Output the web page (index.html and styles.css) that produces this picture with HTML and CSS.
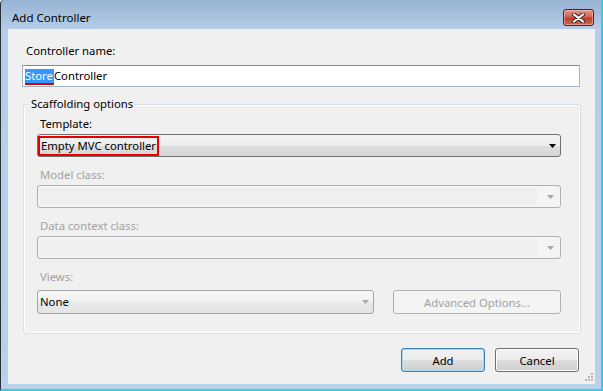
FILE: index.html
```html
<!DOCTYPE html>
<html lang="en">
<head>
    <meta charset="UTF-8">
    <title>Add Controller</title>
    <link rel="stylesheet" href="styles.css">
</head>
<body>
    <div class="window">
        <div class="titlebar">
            <span class="title">Add Controller</span>
            <button class="close">
                <svg width="13" height="10" viewBox="0 0 13 10">
                    <path d="M2 1.5 L11 8.5 M11 1.5 L2 8.5" stroke="#3b2424" stroke-width="4" stroke-linecap="round"/>
                    <path d="M2 1.5 L11 8.5 M11 1.5 L2 8.5" stroke="#ffffff" stroke-width="2.2" stroke-linecap="round"/>
                </svg>
            </button>
        </div>
        <div class="client">
            <div class="lbl first">Controller name:</div>
            <div class="textbox"><span class="sel">Store</span>Controller</div>

            <fieldset class="group">
                <legend>Scaffolding options</legend>

                <div class="lbl">Template:</div>
                <div class="combo">
                    <span class="value marked">Empty MVC controller</span>
                    <svg class="arrow" width="7" height="4" viewBox="0 0 7 4"><path d="M0 0 H7 L3.5 4 Z" fill="#000"/></svg>
                </div>

                <div class="lbl disabled">Model class:</div>
                <div class="combo off">
                    <span class="well"></span>
                    <svg class="arrow" width="7" height="4" viewBox="0 0 7 4"><path d="M0 0 H7 L3.5 4 Z" fill="#a7a7a7"/></svg>
                </div>

                <div class="lbl disabled">Data context class:</div>
                <div class="combo off">
                    <span class="well"></span>
                    <svg class="arrow" width="7" height="4" viewBox="0 0 7 4"><path d="M0 0 H7 L3.5 4 Z" fill="#a7a7a7"/></svg>
                </div>

                <div class="lbl disabled">Views:</div>
                <div class="views-row">
                    <div class="combo views">
                        <span class="value">None</span>
                        <svg class="arrow" width="7" height="4" viewBox="0 0 7 4"><path d="M0 0 H7 L3.5 4 Z" fill="#a7a7a7"/></svg>
                    </div>
                    <button class="btn btn-off">Advanced Options...</button>
                </div>
            </fieldset>

            <div class="actions">
                <button class="btn btn-default">Add</button>
                <button class="btn">Cancel</button>
            </div>

            <svg class="grip" width="8" height="8" viewBox="0 0 8 8">
                <rect x="6" y="0" width="2" height="2" fill="#b5b5b5"/>
                <rect x="3" y="3" width="2" height="2" fill="#b5b5b5"/>
                <rect x="6" y="3" width="2" height="2" fill="#b5b5b5"/>
                <rect x="0" y="6" width="2" height="2" fill="#b5b5b5"/>
                <rect x="3" y="6" width="2" height="2" fill="#b5b5b5"/>
                <rect x="6" y="6" width="2" height="2" fill="#b5b5b5"/>
            </svg>
        </div>
    </div>
</body>
</html>
```

FILE: styles.css
```css
body {
    margin: 0;
    padding: 0;
    font-family: "Noto Sans", "Open Sans", sans-serif;
    font-size: 11.3px;
    line-height: 16px;
    color: #000;
}
.window {
    width: 603px;
    height: 391px;
    box-sizing: border-box;
    display: flex;
    flex-direction: column;
    padding: 0 6px 5px 7px;
    border-left: 1px solid #26313d;
    border-right: 2px solid #2fcfe6;
    border-bottom: 2px solid #2fcfe6;
    border-top-left-radius: 4px;
    background: linear-gradient(to bottom, #97b3d2 0, #b5cde8 29px, #b9d1ea 100%);
}
.titlebar {
    height: 29px;
    flex: none;
    display: flex;
    justify-content: space-between;
    align-items: flex-start;
}
.title {
    margin: 10px 0 0 4px;
    font-size: 11.5px;
}
.close {
    width: 31px;
    height: 17px;
    margin: 9px 1px 0 0;
    padding: 0;
    border: 1px solid #4a2323;
    border-radius: 3px;
    background: linear-gradient(to bottom, #e29a8a 0, #cf6451 45%, #bd3f2a 55%, #d0664f 100%);
    box-shadow: inset 0 0 0 1px rgba(255, 210, 200, 0.5);
    display: flex;
    align-items: center;
    justify-content: center;
}
.client {
    position: relative;
    flex: 1;
    background: #f0f0f0;
    padding: 14px 15px 0 14px;
}
.lbl {
    padding-left: 3px;
}
.lbl.first {
    padding-left: 4px;
}
.lbl.disabled {
    color: #a3a3a3;
}
.textbox {
    margin-top: 6px;
    height: 22px;
    box-sizing: border-box;
    border: 1px solid #9fb5cc;
    border-top-color: #6f8fb0;
    background: #fff;
    padding: 2px 0 0 2px;
    line-height: 16px;
}
.sel {
    display: inline-block;
    background: #3399ff;
    color: #fff;
    line-height: 14px;
    padding-right: 1px;
    border-bottom: 2px solid #e00000;
}
.group {
    margin: 9px -1px 0 1px;
    border: 1px solid #d5dfe5;
    border-radius: 3px;
    box-shadow: inset 0 0 0 1px #fff;
    padding: 4px 19px 19px 13px;
}
.group legend {
    margin-left: -8px;
    padding: 0 2px;
    background: #f0f0f0;
}
.combo {
    margin: 2px 0 10px;
    height: 23px;
    box-sizing: border-box;
    display: flex;
    align-items: center;
    justify-content: space-between;
    border: 1px solid #707070;
    border-radius: 3px;
    background: linear-gradient(to bottom, #f3f3f3 0, #ececec 50%, #dfdfdf 51%, #d5d5d5 100%);
}
.combo .arrow {
    margin-right: 4px;
    flex: none;
}
.combo .value {
    padding-left: 2px;
}
.combo .value.marked {
    padding: 0 1px 0 1px;
    border: 2px solid #e60000;
    line-height: 16px;
}
.combo.off {
    border-color: #adb2b5;
    background: #f4f4f4;
    padding: 2px;
}
.combo.off .well {
    align-self: stretch;
    flex: 1;
    margin-right: 10px;
    background: #efefef;
}
.views-row {
    display: flex;
    gap: 19px;
    margin-top: 5px;
}
.views-row .combo {
    margin: 0;
    width: 337px;
    height: 24px;
    border-color: #a5a5a5;
    background: linear-gradient(to bottom, #f7f7f7 0, #f1f1f1 50%, #e9e9e9 51%, #e4e4e4 100%);
}
.btn {
    font-family: inherit;
    font-size: 11.3px;
    height: 24px;
    padding: 0;
    box-sizing: border-box;
    border: 1px solid #707070;
    border-radius: 3px;
    background: linear-gradient(to bottom, #f2f2f2 0, #ebebeb 50%, #dddddd 51%, #cfcfcf 100%);
    box-shadow: inset 0 0 0 1px #fcfcfc;
    color: #000;
}
.btn-off {
    flex: 1;
    border-color: #adb2b5;
    background: #f4f4f4;
    box-shadow: none;
    color: #a3a3a3;
}
.actions {
    display: flex;
    justify-content: flex-end;
    gap: 10px;
    margin: 14px 1px 0 0;
}
.actions .btn {
    width: 84px;
}
.btn-default {
    border-color: #3c7fb1;
    box-shadow: inset 0 0 0 1px #a8d8f4;
}
.grip {
    position: absolute;
    right: 2px;
    bottom: 3px;
}
```
